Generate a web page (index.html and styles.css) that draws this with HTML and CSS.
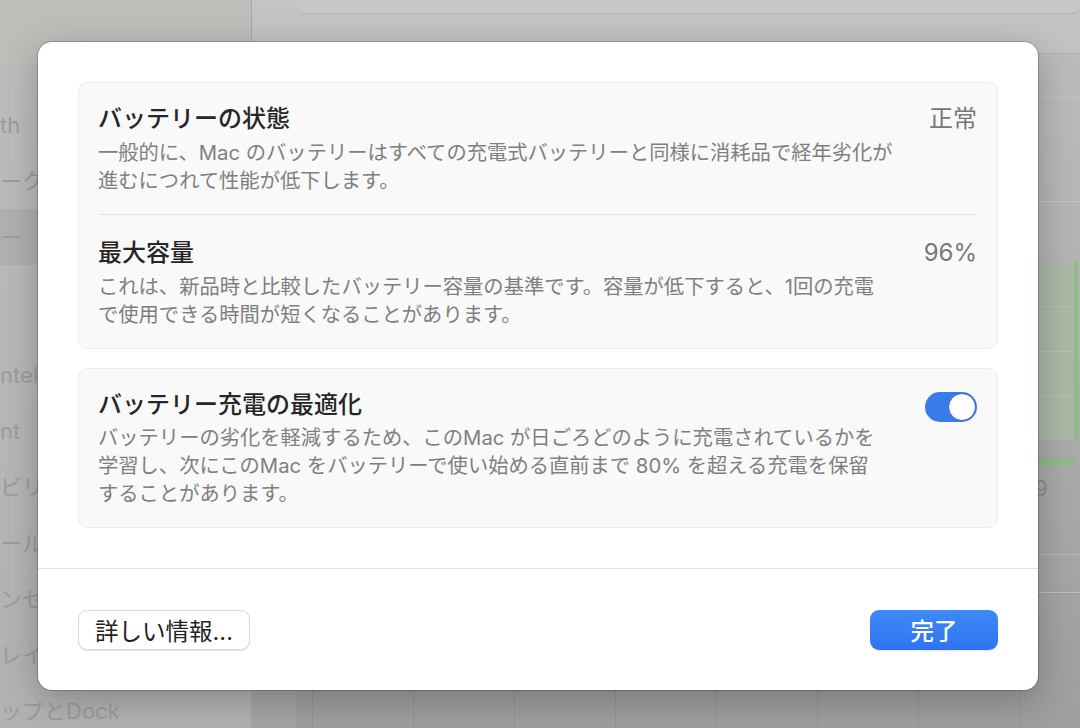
FILE: index.html
```html
<!DOCTYPE html>
<html lang="ja">
<head>
    <meta charset="UTF-8">
    <meta name="viewport" content="width=device-width, initial-scale=1.0">
    <title>バッテリー</title>
    <link rel="stylesheet" href="styles.css">
</head>
<body>

    <!-- 背景のシステム設定ウインドウ -->
    <div class="app">
        <aside class="sidebar">
            <div class="side-item">th</div>
            <div class="side-item">ーク</div>
            <div class="side-item selected">ー</div>
            <div class="side-item"></div>
            <div class="side-item group-start">ntell</div>
            <div class="side-item">nt</div>
            <div class="side-item">ビリ</div>
            <div class="side-item">ール</div>
            <div class="side-item">ンセ</div>
            <div class="side-item">レイ</div>
            <div class="side-item">ップとDock</div>
        </aside>

        <main class="content">
            <div class="top-card"></div>

            <section class="panel">
                <div class="panel-head"></div>
                <div class="panel-row"></div>
                <div class="chart">
                    <div class="chart-grid">
                        <div class="chart-bar"></div>
                    </div>
                    <div class="chart-base"></div>
                    <div class="chart-axis">9</div>
                </div>
            </section>

            <section class="panel lower">
                <div class="panel-row short"></div>
                <div class="usage-grid">
                    <div class="usage-col"></div>
                    <div class="usage-col"></div>
                    <div class="usage-col"></div>
                    <div class="usage-col"></div>
                    <div class="usage-col"></div>
                    <div class="usage-col"></div>
                    <div class="usage-col"></div>
                    <div class="usage-col"></div>
                </div>
            </section>
        </main>
    </div>

    <!-- バッテリーの状態シート -->
    <div class="sheet">
        <div class="sheet-body">
            <div class="group">
                <div class="row">
                    <div class="row-text">
                        <div class="row-title">バッテリーの状態</div>
                        <div class="row-desc">一般的に、Mac のバッテリーはすべての充電式バッテリーと同様に消耗品で経年劣化が<br>進むにつれて性能が低下します。</div>
                    </div>
                    <div class="row-value">正常</div>
                </div>
                <div class="row">
                    <div class="row-text">
                        <div class="row-title">最大容量</div>
                        <div class="row-desc">これは、新品時と比較したバッテリー容量の基準です。容量が低下すると、1回の充電<br>で使用できる時間が短くなることがあります。</div>
                    </div>
                    <div class="row-value">96%</div>
                </div>
            </div>

            <div class="group">
                <div class="row">
                    <div class="row-text">
                        <div class="row-title">バッテリー充電の最適化</div>
                        <div class="row-desc tight">バッテリーの劣化を軽減するため、このMac が日ごろどのように充電されているかを<br>学習し、次にこのMac をバッテリーで使い始める直前まで 80% を超える充電を保留<br>することがあります。</div>
                    </div>
                    <div class="toggle on"><div class="knob"></div></div>
                </div>
            </div>
        </div>

        <div class="sheet-footer">
            <button class="btn btn-secondary">詳しい情報...</button>
            <button class="btn btn-primary">完了</button>
        </div>
    </div>

</body>
</html>
```

FILE: styles.css
```css
body {
    margin: 0;
    width: 1080px;
    height: 728px;
    overflow: hidden;
    font-family: "Inter", "Noto Sans CJK JP", sans-serif;
    position: relative;
}
.app {
    display: flex;
    height: 100%;
}
.sidebar {
    width: 252px;
    flex-shrink: 0;
    padding-top: 97px;
    background: linear-gradient(to bottom, #bebebb, #b1b2b3);
    border-right: 1px solid #a8a8a8;
    box-sizing: border-box;
}
.side-item {
    height: 56px;
    line-height: 56px;
    font-size: 22px;
    color: #9c9c9c;
    white-space: nowrap;
    overflow: hidden;
}
.side-item.selected {
    background: #b0b0ae;
}
.side-item.group-start {
    margin-top: 26px;
}
.content {
    flex: 1;
    padding-left: 44px;
    background: linear-gradient(to bottom, #c4c4c4, #b8b8b8 40%, #a4a4a4);
    overflow: hidden;
}
.top-card {
    height: 13px;
    background: #c8c8c8;
    border-bottom: 1px solid #b4b4b4;
    border-radius: 0 0 8px 8px;
}
.panel {
    margin-top: 39px;
    border-top: 1px solid #b2b2b2;
    background: rgba(0, 0, 0, 0.03);
}
.panel-head {
    height: 43px;
    border-bottom: 1px solid #c3c3c3;
}
.panel-row {
    height: 103px;
    border-bottom: 1px solid #c3c3c3;
}
.chart {
    padding-top: 60px;
    padding-right: 2px;
}
.chart-grid {
    height: 178px;
    display: flex;
    justify-content: flex-end;
    background: repeating-linear-gradient(to bottom, #a9b9a6 0, #a9b9a6 44px, #b6c2b3 44px, #b6c2b3 45px);
}
.chart-bar {
    width: 4px;
    background: #8dbd88;
    border-radius: 2px;
}
.chart-base {
    height: 8px;
    margin-top: 18px;
    margin-right: 3px;
    background: #8fbb8a;
    border-radius: 4px;
}
.chart-axis {
    text-align: right;
    padding-right: 30px;
    font-size: 22px;
    line-height: 44px;
    color: #8e8e8e;
    height: 88px;
}
.panel.lower {
    margin-top: 0;
    border-top: 1px solid #b9b9b9;
}
.panel-row.short {
    height: 37px;
}
.usage-grid {
    display: flex;
    padding-left: 16px;
    height: 140px;
    border-top: 1px solid #9d9d9d;
}
.usage-col {
    width: 100px;
    flex-shrink: 0;
    border-left: 1px dashed #8e8e8e;
}

/* シート */
.sheet {
    position: absolute;
    left: 38px;
    top: 42px;
    width: 1000px;
    height: 648px;
    background: #fff;
    border-radius: 14px;
    box-shadow: 0 0 0 1px rgba(0, 0, 0, 0.2), 0 10px 36px rgba(0, 0, 0, 0.25);
    display: flex;
    flex-direction: column;
    overflow: hidden;
}
.sheet-body {
    padding: 40px;
    display: flex;
    flex-direction: column;
    gap: 19px;
}
.group {
    background: #f9f9f9;
    border: 1px solid #ececec;
    border-radius: 9px;
}
.row {
    margin: 0 20px;
    padding: 22px 0 19px;
    display: flex;
    justify-content: space-between;
    gap: 20px;
}
.row + .row {
    border-top: 1px solid #e5e5e5;
    padding-top: 24px;
}
.row-title {
    font-size: 24px;
    line-height: 28px;
    font-weight: 500;
    color: #262626;
    margin-left: -1px;
}
.row-desc {
    margin-top: 6px;
    font-size: 20.3px;
    line-height: 28px;
    color: #7f7f7f;
    white-space: nowrap;
    margin-left: -1px;
}
.row-desc.tight {
    margin-top: 5px;
}
.row-value {
    font-size: 24px;
    line-height: 28px;
    color: #787878;
}
.toggle {
    width: 52px;
    height: 30px;
    margin-top: 1px;
    box-sizing: border-box;
    padding: 1px;
    border-radius: 15px;
    background: #3a7bea;
    display: flex;
    justify-content: flex-end;
    flex-shrink: 0;
}
.knob {
    width: 28px;
    height: 28px;
    box-sizing: border-box;
    border-radius: 50%;
    background: #fff;
    border: 1px solid #2f63c6;
}
.sheet-footer {
    border-top: 1px solid #e2e2e2;
    padding: 41px 40px 40px;
    display: flex;
    justify-content: space-between;
}
.btn {
    height: 40px;
    border-radius: 9px;
    font-family: inherit;
    font-size: 23.5px;
    padding: 0;
    cursor: pointer;
}
.btn-secondary {
    width: 172px;
    background: #fff;
    color: #222;
    border: 1px solid #dadada;
    box-shadow: 0 1px 1px rgba(0, 0, 0, 0.12);
}
.btn-primary {
    width: 128px;
    background: linear-gradient(to bottom, #3e89f9, #2f74f0);
    color: #fff;
    border: none;
    font-weight: 500;
    box-shadow: 0 1px 1px rgba(0, 0, 0, 0.1);
}
```
